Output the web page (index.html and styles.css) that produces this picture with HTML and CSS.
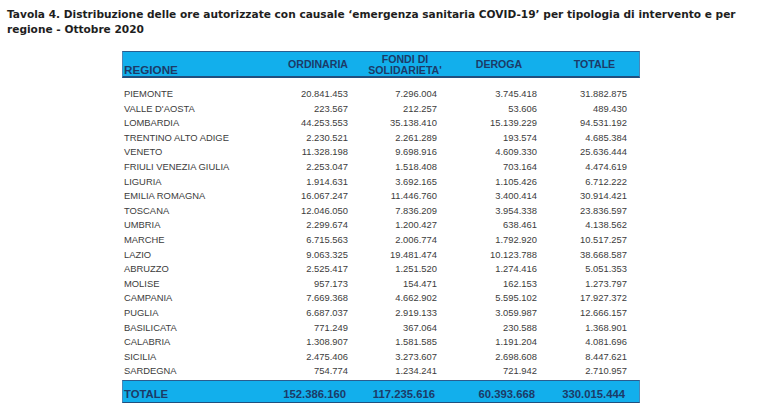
FILE: index.html
```html
<!DOCTYPE html>
<html lang="it">
<head>
<meta charset="utf-8">
<title>Tavola 4</title>
<link rel="stylesheet" href="styles.css">
</head>
<body>
<div class="page">
  <h1 class="title">Tavola 4. Distribuzione delle ore autorizzate con causale ‘emergenza sanitaria COVID-19’ per tipologia di intervento e per<br>regione - Ottobre 2020</h1>
  <div class="table">
    <div class="head">
      <div class="h-region">REGIONE</div>
      <div class="h-col">ORDINARIA</div>
      <div class="h-col h-two">FONDI DI<br>SOLIDARIETA'</div>
      <div class="h-col">DEROGA</div>
      <div class="h-col">TOTALE</div>
    </div>
    <div class="body">
      <div class="row"><span class="reg">PIEMONTE</span><span>20.841.453</span><span>7.296.004</span><span>3.745.418</span><span>31.882.875</span></div>
      <div class="row"><span class="reg">VALLE D'AOSTA</span><span>223.567</span><span>212.257</span><span>53.606</span><span>489.430</span></div>
      <div class="row"><span class="reg">LOMBARDIA</span><span>44.253.553</span><span>35.138.410</span><span>15.139.229</span><span>94.531.192</span></div>
      <div class="row"><span class="reg">TRENTINO ALTO ADIGE</span><span>2.230.521</span><span>2.261.289</span><span>193.574</span><span>4.685.384</span></div>
      <div class="row"><span class="reg">VENETO</span><span>11.328.198</span><span>9.698.916</span><span>4.609.330</span><span>25.636.444</span></div>
      <div class="row"><span class="reg">FRIULI VENEZIA GIULIA</span><span>2.253.047</span><span>1.518.408</span><span>703.164</span><span>4.474.619</span></div>
      <div class="row"><span class="reg">LIGURIA</span><span>1.914.631</span><span>3.692.165</span><span>1.105.426</span><span>6.712.222</span></div>
      <div class="row"><span class="reg">EMILIA ROMAGNA</span><span>16.067.247</span><span>11.446.760</span><span>3.400.414</span><span>30.914.421</span></div>
      <div class="row"><span class="reg">TOSCANA</span><span>12.046.050</span><span>7.836.209</span><span>3.954.338</span><span>23.836.597</span></div>
      <div class="row"><span class="reg">UMBRIA</span><span>2.299.674</span><span>1.200.427</span><span>638.461</span><span>4.138.562</span></div>
      <div class="row"><span class="reg">MARCHE</span><span>6.715.563</span><span>2.006.774</span><span>1.792.920</span><span>10.517.257</span></div>
      <div class="row"><span class="reg">LAZIO</span><span>9.063.325</span><span>19.481.474</span><span>10.123.788</span><span>38.668.587</span></div>
      <div class="row"><span class="reg">ABRUZZO</span><span>2.525.417</span><span>1.251.520</span><span>1.274.416</span><span>5.051.353</span></div>
      <div class="row"><span class="reg">MOLISE</span><span>957.173</span><span>154.471</span><span>162.153</span><span>1.273.797</span></div>
      <div class="row"><span class="reg">CAMPANIA</span><span>7.669.368</span><span>4.662.902</span><span>5.595.102</span><span>17.927.372</span></div>
      <div class="row"><span class="reg">PUGLIA</span><span>6.687.037</span><span>2.919.133</span><span>3.059.987</span><span>12.666.157</span></div>
      <div class="row"><span class="reg">BASILICATA</span><span>771.249</span><span>367.064</span><span>230.588</span><span>1.368.901</span></div>
      <div class="row"><span class="reg">CALABRIA</span><span>1.308.907</span><span>1.581.585</span><span>1.191.204</span><span>4.081.696</span></div>
      <div class="row"><span class="reg">SICILIA</span><span>2.475.406</span><span>3.273.607</span><span>2.698.608</span><span>8.447.621</span></div>
      <div class="row"><span class="reg">SARDEGNA</span><span>754.774</span><span>1.234.241</span><span>721.942</span><span>2.710.957</span></div>
    </div>
    <div class="total">
      <span class="reg">TOTALE</span><span>152.386.160</span><span>117.235.616</span><span>60.393.668</span><span>330.015.444</span>
    </div>
  </div>
</div>
</body>
</html>
```

FILE: styles.css
```css
html, body {
  margin: 0;
  padding: 0;
  background: #ffffff;
}

.page {
  padding: 7px 0 0 7px;
}

.title {
  margin: 0;
  font-family: "DejaVu Sans", Verdana, sans-serif;
  font-weight: bold;
  font-size: 10.6px;
  line-height: 15px;
  color: #1e1e1e;
  white-space: nowrap;
}

.table {
  margin: 14px 0 0 115px;
  width: 518px;
  font-family: "Liberation Sans", Arial, sans-serif;
}

.head {
  display: grid;
  grid-template-columns: 151px 88px 86px 102px 89px;
  height: 24px;
  background: #12afec;
  border-top: 1px solid #2a5d8f;
  border-bottom: 2px solid #214f7e;
  border-left: 1px solid #4a87b8;
  border-right: 1px solid #4a87b8;
  color: #1c3b68;
  font-weight: bold;
}

.h-region {
  align-self: end;
  padding: 0 0 0 1px;
  font-size: 11.7px;
  line-height: 12px;
}

.h-col {
  align-self: center;
  text-align: center;
  font-size: 10.6px;
  line-height: 10.5px;
  padding-top: 1px;
  white-space: nowrap;
}

.body {
  margin-top: 9px;
}

.row, .total {
  display: grid;
  grid-template-columns: 148px 78px 89px 100px 90px 13px;
}

.row {
  height: 14.6px;
  line-height: 14.6px;
  font-size: 9.4px;
  color: #3c3c3c;
}

.row span, .total span {
  text-align: right;
  white-space: nowrap;
}

.row .reg {
  text-align: left;
  padding-left: 2px;
}

.total {
  margin-top: 1px;
  height: 21px;
  background: #12afec;
  border-top: 1px solid #2a5d8f;
  border-bottom: 1px solid #214f7e;
  border-left: 1px solid #4a87b8;
  border-right: 1px solid #4a87b8;
  color: #1c3b68;
  font-weight: bold;
  font-size: 11.3px;
  align-items: end;
  line-height: 13px;
}

.total span {
  padding: 0 3px 1px 0;
}

.total .reg {
  text-align: left;
  padding: 0 0 1px 1px;
}
```
